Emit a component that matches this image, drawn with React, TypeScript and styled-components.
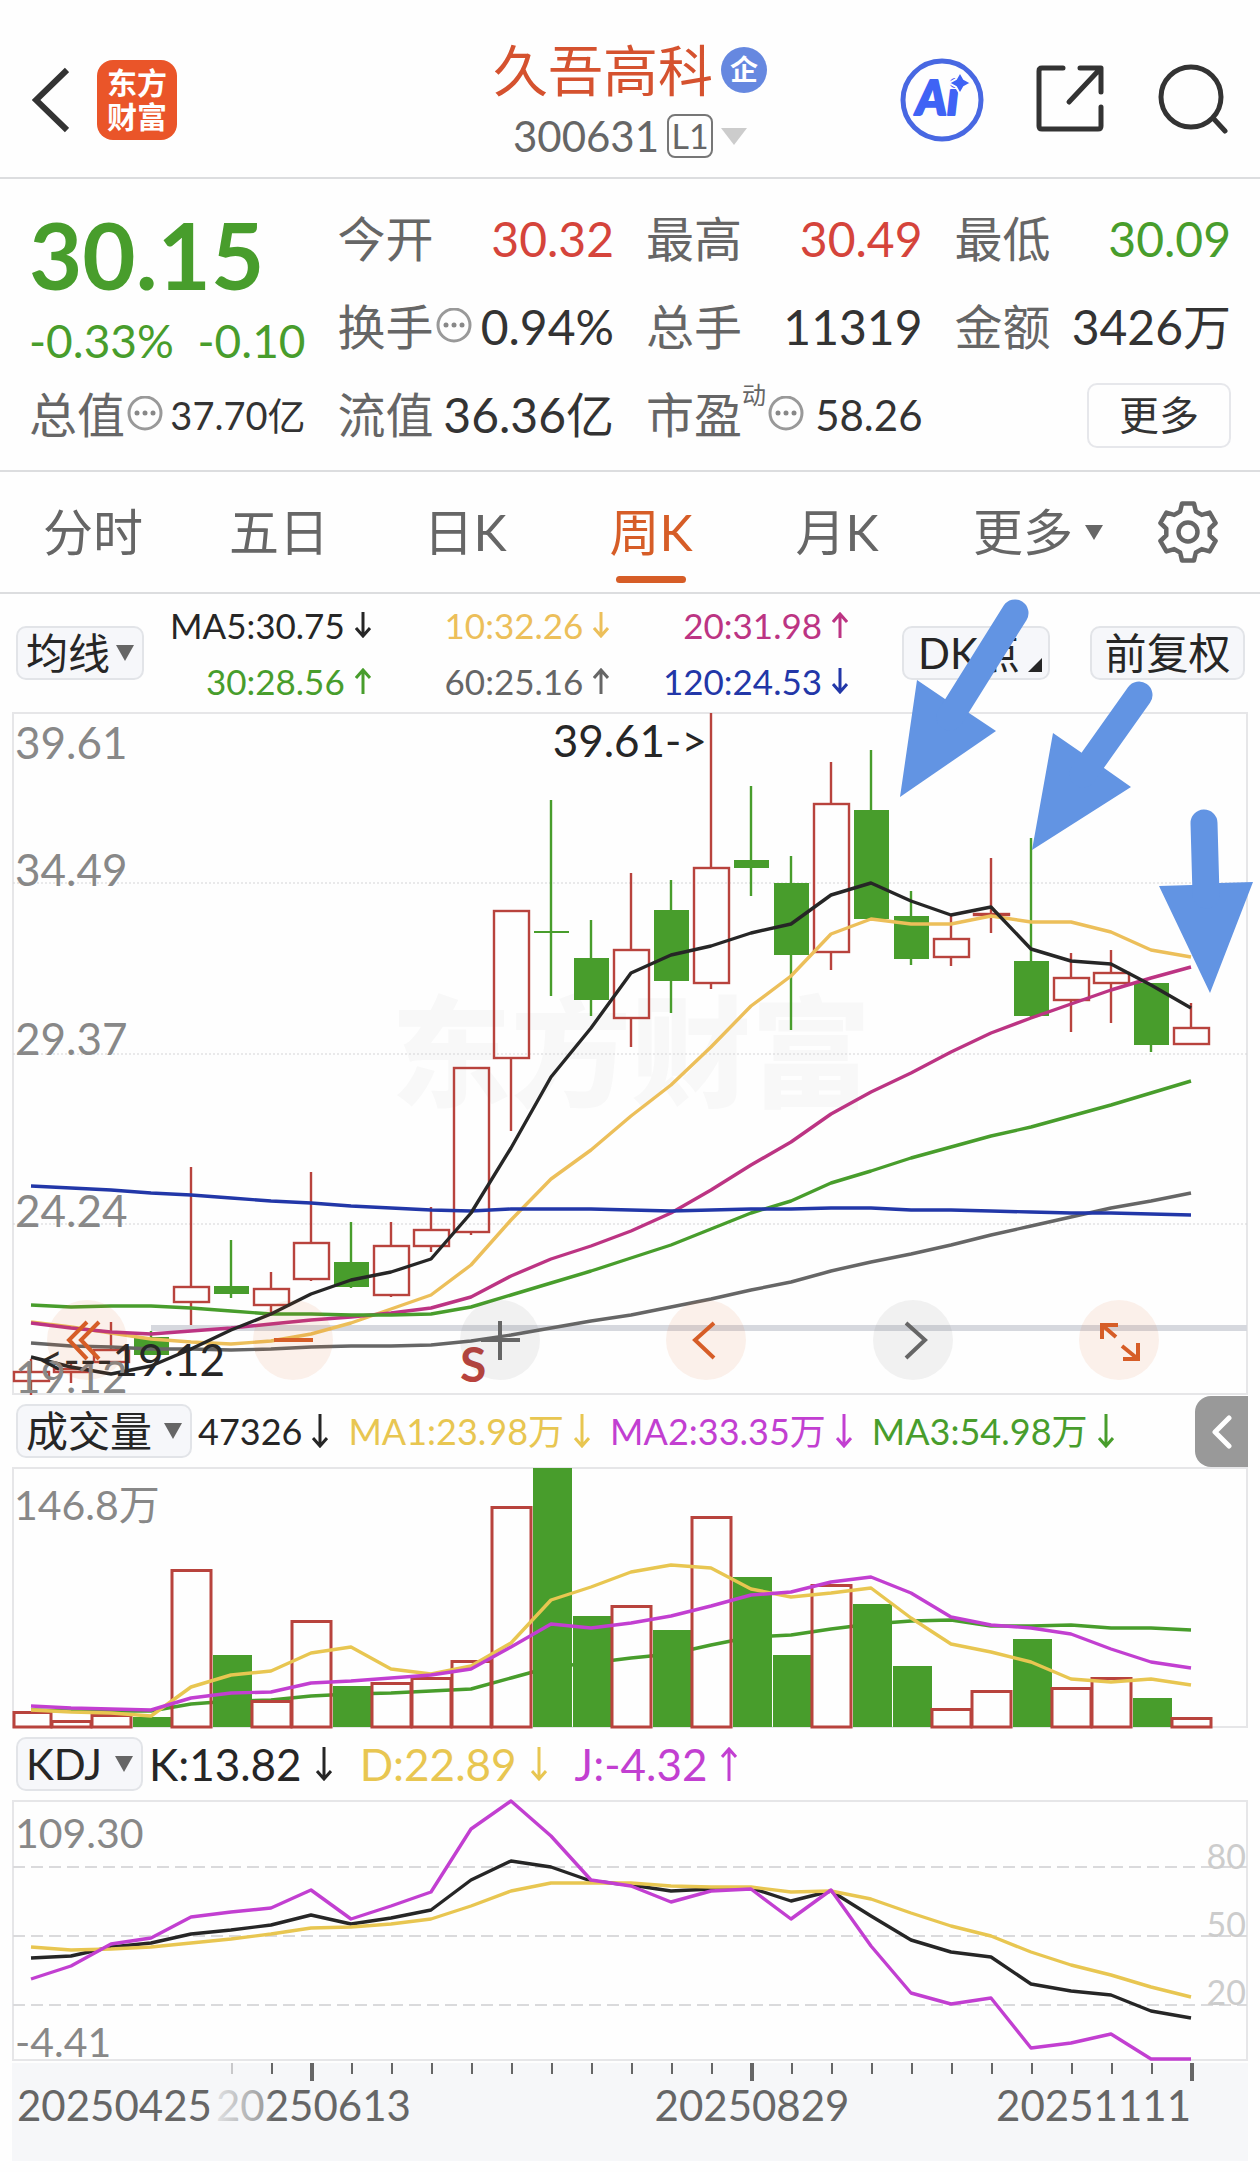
import React from "react";
import styled, { createGlobalStyle, css } from "styled-components";

const C = {
  green: "#489d2c",
  red: "#d5443b",
  candle: "#b8433d",
  text: "#333333",
  ink: "#262626",
  label: "#666666",
  muted: "#888888",
  faint: "#cccccc",
  orange: "#d65d27",
  amber: "#ecbf5a",
  yellow: "#e8c651",
  magenta: "#bc3483",
  purple: "#c23fd1",
  blue: "#2237a8",
  line: "#dcdddf",
  frame: "#e6e6e8",
  note: "#6294e3",
};

const FONT = `Lato, "Noto Sans CJK SC", sans-serif`;

const GlobalStyle = createGlobalStyle`
  *, *::before, *::after { box-sizing: border-box; }
  body {
    margin: 0;
    background: #fefefe;
    color: ${C.text};
    font-family: ${FONT};
  }
  button, select {
    font: inherit;
    color: inherit;
    margin: 0;
    padding: 0;
    border: 0;
    background: none;
    cursor: pointer;
  }
  svg { display: block; }
  svg text { font-family: ${FONT}; }
`;

const Page = styled.main`
  width: 100%;
  padding-bottom: 11px;
  overflow-x: hidden;
`;

/* ---------- header ---------- */

const Header = styled.header`
  display: grid;
  grid-template-columns: 1fr auto 1fr;
  padding: 34px 32px 11px;
  border-bottom: 2px solid ${C.line};
`;

const HeaderSide = styled.div<{ $end?: boolean }>`
  display: flex;
  align-items: center;
  justify-content: ${(p) => (p.$end ? "flex-end" : "flex-start")};
  gap: ${(p) => (p.$end ? 50 : 28)}px;
`;

const IconButton = styled.button`
  display: flex;
  align-items: center;
  justify-content: center;
`;

const BrandLogo = styled.a`
  width: 80px;
  height: 80px;
  border-radius: 16px;
  background: #ea5529;
  color: #fff;
  font-weight: 700;
  font-size: 30px;
  line-height: 34px;
  text-align: center;
  text-decoration: none;
  padding: 5px 8px;
`;

const TitleBlock = styled.div`
  display: flex;
  flex-direction: column;
  align-items: center;
`;

const TitleLine = styled.div`
  display: flex;
  align-items: center;
  gap: 8px;
  height: 72px;
`;

const StockName = styled.h1`
  margin: 0;
  font-size: 55px;
  line-height: 72px;
  font-weight: 400;
  color: #d5522f;
`;

const EntBadge = styled.span`
  width: 46px;
  height: 46px;
  border-radius: 50%;
  background: #6688e0;
  color: #fff;
  font-size: 28px;
  font-weight: 700;
  line-height: 44px;
  text-align: center;
`;

const CodeButton = styled.button`
  display: flex;
  align-items: center;
  gap: 8px;
  height: 60px;
  font-size: 42px;
  line-height: 60px;
  color: ${C.label};
`;

const LevelTag = styled.span`
  width: 46px;
  height: 44px;
  border: 2px solid #777;
  border-radius: 8px;
  font-size: 34px;
  line-height: 40px;
  text-align: center;
`;

/* ---------- quote ---------- */

const Quote = styled.section`
  display: grid;
  grid-template-columns: repeat(4, minmax(0, 1fr));
  grid-auto-rows: 88px;
  column-gap: 32px;
  padding: 16px 29px 11px;
  border-bottom: 2px solid ${C.line};
`;

const PriceCell = styled.div`
  grid-row: span 2;
  color: ${C.green};
`;

const Price = styled.div`
  font-size: 92px;
  line-height: 120px;
  font-weight: 700;
`;

const Change = styled.div`
  display: flex;
  justify-content: space-between;
  font-size: 46px;
  line-height: 52px;
`;

const Cell = styled.div`
  display: flex;
  align-items: center;
  justify-content: space-between;
  white-space: nowrap;
`;

const CellLabel = styled.span`
  display: flex;
  align-items: center;
  font-size: 48px;
  line-height: 64px;
  color: ${C.label};
`;

const SupMark = styled.sup`
  align-self: flex-start;
  font-size: 24px;
  line-height: 24px;
`;

const CellValue = styled.span<{ $color?: string; $size?: number }>`
  font-size: ${(p) => p.$size ?? 48}px;
  line-height: 64px;
  color: ${(p) => p.$color ?? C.text};
`;

const MoreButton = styled.button`
  width: 144px;
  height: 65px;
  margin-left: auto;
  border: 2px solid #e6e7eb;
  border-radius: 10px;
  font-size: 40px;
  line-height: 60px;
`;

/* ---------- tabs ---------- */

const Tabs = styled.nav`
  display: grid;
  grid-template-columns: repeat(6, 31fr) 24fr;
  height: 122px;
  border-bottom: 2px solid ${C.line};
`;

const Tab = styled.button<{ $active?: boolean }>`
  display: flex;
  align-items: center;
  justify-content: center;
  gap: 12px;
  font-size: 50px;
  line-height: 120px;
  color: ${C.label};
  ${(p) =>
    p.$active &&
    css`
      position: relative;
      color: ${C.orange};
      &::after {
        content: "";
        position: absolute;
        left: 50%;
        bottom: 9px;
        width: 70px;
        height: 7px;
        margin-left: -35px;
        border-radius: 4px;
        background: ${C.orange};
      }
    `}
`;

const MoreTab = styled(Tab)`
  padding-left: 30px;
`;

/* ---------- indicator bars ---------- */

const ChartArea = styled.section`
  position: relative;
`;

const Bar = styled.div<{ $tall?: boolean }>`
  position: relative;
  display: flex;
  align-items: center;
  height: ${(p) => (p.$tall ? 118 : 72)}px;
  padding: 0 15px 0 16px;
`;

const pill = css`
  height: 54px;
  border: 2px solid #e2e4e8;
  border-radius: 10px;
  background: #f6f7fa;
  color: ${C.ink};
  font-size: 42px;
  line-height: 50px;
`;

const Picker = styled.label<{ $width: number }>`
  position: relative;
  flex: none;
  width: ${(p) => p.$width}px;
  svg {
    position: absolute;
    right: 10px;
    top: 19px;
    pointer-events: none;
  }
`;

const PickerSelect = styled.select`
  ${pill}
  width: 100%;
  padding: 0 0 0 8px;
  appearance: none;
`;

const PillButton = styled.button<{ $width: number; $menu?: boolean }>`
  ${pill}
  position: relative;
  flex: none;
  width: ${(p) => p.$width}px;
  padding-right: ${(p) => (p.$menu ? 14 : 0)}px;
  svg {
    position: absolute;
    right: 6px;
    bottom: 6px;
  }
`;

const AverageGrid = styled.div`
  flex: 1;
  display: grid;
  grid-template-columns: 38fr 40fr 40fr;
  row-gap: 4px;
`;

const PillGroup = styled.div`
  display: flex;
  gap: 40px;
  margin-left: 54px;
`;

const Reading = styled.span<{ $color: string; $size: number }>`
  display: flex;
  align-items: center;
  justify-content: flex-end;
  gap: ${(p) => (p.$size > 40 ? 14 : 10)}px;
  font-size: ${(p) => p.$size}px;
  line-height: 52px;
  color: ${(p) => p.$color};
  white-space: nowrap;
`;

const Readings = styled.div<{ $gap: number }>`
  display: flex;
  gap: ${(p) => p.$gap}px;
  margin-left: 6px;
`;

const SideToggle = styled.button`
  position: absolute;
  right: 12px;
  top: 1px;
  width: 53px;
  height: 71px;
  border-radius: 16px 0 0 16px;
  background: #999;
  display: flex;
  align-items: center;
  justify-content: center;
`;

/* ---------- plots ---------- */

const Plot = styled.div`
  position: relative;
  margin: 0 12px;
  > svg { width: 100%; height: auto; overflow: visible; }
`;

const PlotControls = styled.div`
  position: absolute;
  left: 0;
  right: 0;
  bottom: 15px;
  display: flex;
  justify-content: space-between;
  padding: 0 89px 0 35px;
`;

const RoundButton = styled.button<{ $warm?: boolean }>`
  width: 80px;
  height: 80px;
  border-radius: 50%;
  background: ${(p) => (p.$warm ? "rgba(220, 95, 35, 0.09)" : "rgba(90, 90, 90, 0.08)")};
  color: ${(p) => (p.$warm ? C.orange : C.label)};
`;

const Notes = styled.svg`
  position: absolute;
  left: 0;
  top: 0;
  width: 100%;
  height: auto;
  pointer-events: none;
`;

/* ---------- icons ---------- */

const Caret = ({ w = 18, h = 16, color = C.label }: { w?: number; h?: number; color?: string }) => (
  <svg width={w} height={h} viewBox="0 0 10 10" preserveAspectRatio="none" aria-hidden>
    <path d="M0 0H10L5 10Z" fill={color} />
  </svg>
);

const Trend = ({ up, h = 28 }: { up?: boolean; h?: number }) => (
  <svg width="16" height={h} viewBox={`0 0 16 ${h}`} fill="none" stroke="currentColor" strokeWidth="3" aria-hidden>
    {up ? <path d={`M8 ${h}V2M1 10L8 2L15 10`} /> : <path d={`M8 0V${h - 2}M1 ${h - 10}L8 ${h - 2}L15 ${h - 10}`} />}
  </svg>
);

const Info = () => (
  <svg width="38" height="38" viewBox="0 0 38 38" aria-hidden>
    <circle cx="20" cy="17" r="16" fill="none" stroke="#999" strokeWidth="3" />
    <circle cx="12" cy="17" r="2.5" fill="#888" />
    <circle cx="20" cy="17" r="2.5" fill="#888" />
    <circle cx="28" cy="17" r="2.5" fill="#888" />
  </svg>
);

const Gear = () => {
  const pts: string[] = [];
  const at = (deg: number, r: number) => {
    const a = (deg * Math.PI) / 180;
    pts.push(`${(32 + r * Math.cos(a)).toFixed(1)},${(32 + r * Math.sin(a)).toFixed(1)}`);
  };
  for (let k = 0; k < 6; k++) {
    const a = -90 + k * 60;
    at(a - 12, 29);
    at(a + 12, 29);
    at(a + 21, 22);
    at(a + 39, 22);
  }
  return (
    <svg width="64" height="64" viewBox="0 0 64 64" fill="none" stroke={C.label} strokeWidth="4.5" strokeLinejoin="round" aria-hidden>
      <polygon points={pts.join(" ")} />
      <circle cx="32" cy="32" r="9.5" />
    </svg>
  );
};

/* ---------- data ---------- */

type Candle = [up: 0 | 1, high: number, top: number, bottom: number, low: number];

const candles: Candle[] = [
  [1, 1359, 1371, 1382, 1395], [1, 1362, 1368, 1373, 1383], [1, 1322, 1349, 1363, 1363],
  [0, 1331, 1337, 1355, 1355], [1, 1167, 1286, 1303, 1325], [0, 1240, 1286, 1294, 1298],
  [1, 1272, 1288, 1306, 1313], [1, 1172, 1242, 1280, 1281], [0, 1222, 1262, 1287, 1288],
  [1, 1222, 1245, 1296, 1297], [1, 1207, 1229, 1247, 1252], [1, 1067, 1067, 1233, 1235],
  [1, 910, 910, 1059, 1131], [0, 800, 931, 933, 996], [0, 920, 958, 1000, 1016],
  [1, 873, 949, 1019, 1047], [0, 880, 910, 981, 1013], [1, 713, 867, 984, 989],
  [0, 786, 860, 868, 896], [0, 856, 883, 955, 1030], [1, 762, 803, 953, 970],
  [0, 750, 810, 919, 919], [0, 891, 916, 959, 965], [1, 916, 938, 958, 966],
  [1, 858, 913, 916, 933], [0, 838, 961, 1016, 1018], [1, 953, 977, 1001, 1032],
  [1, 950, 972, 984, 1023], [0, 983, 983, 1045, 1052], [1, 1003, 1027, 1045, 1045],
];

const averages: { color: string; y: number[] }[] = [
  { color: C.label, y: [1343, 1346, 1347, 1349, 1349, 1350, 1349, 1347, 1346, 1346, 1345, 1341, 1335, 1328, 1321, 1315, 1307, 1299, 1290, 1282, 1271, 1262, 1254, 1245, 1235, 1226, 1217, 1208, 1201, 1193] },
  { color: C.amber, y: [1322, 1327, 1333, 1339, 1342, 1344, 1341, 1334, 1323, 1309, 1295, 1265, 1220, 1179, 1150, 1116, 1085, 1047, 1006, 976, 934, 919, 924, 924, 916, 922, 922, 932, 950, 957] },
  { color: C.magenta, y: [1323, 1328, 1332, 1334, 1331, 1328, 1324, 1320, 1317, 1313, 1308, 1297, 1276, 1259, 1246, 1231, 1213, 1190, 1165, 1142, 1114, 1092, 1073, 1052, 1033, 1018, 1004, 990, 978, 967] },
  { color: C.green, y: [1305, 1307, 1306, 1306, 1308, 1311, 1314, 1314, 1315, 1315, 1314, 1307, 1295, 1283, 1271, 1258, 1245, 1229, 1213, 1201, 1183, 1171, 1158, 1147, 1136, 1127, 1116, 1105, 1093, 1081] },
  { color: C.blue, y: [1186, 1188, 1190, 1193, 1195, 1198, 1201, 1203, 1206, 1208, 1210, 1211, 1209, 1209, 1209, 1210, 1211, 1210, 1209, 1209, 1208, 1208, 1210, 1210, 1211, 1212, 1213, 1213, 1214, 1215] },
  { color: C.ink, y: [1357, 1367, 1374, 1366, 1349, 1330, 1314, 1294, 1280, 1272, 1259, 1213, 1148, 1077, 1028, 973, 955, 946, 933, 924, 895, 883, 901, 915, 907, 949, 961, 964, 985, 1008] },
];

const volumeTops = [
  1711, 1720, 1714, 1717, 1569, 1655, 1700, 1620, 1686, 1682, 1677, 1660, 1506, 1468, 1616,
  1605, 1630, 1516, 1577, 1655, 1584, 1604, 1666, 1708, 1690, 1639, 1687, 1677, 1698, 1717,
];

const volumeYellow = [1710, 1712, 1713, 1716, 1687, 1675, 1671, 1653, 1647, 1669, 1674, 1666, 1643, 1600, 1587, 1572, 1565, 1568, 1589, 1597, 1593, 1588, 1618, 1644, 1652, 1662, 1679, 1682, 1679, 1685];
const volumePurple = [1706, 1708, 1709, 1710, 1698, 1693, 1692, 1683, 1681, 1678, 1675, 1669, 1647, 1624, 1628, 1623, 1616, 1606, 1595, 1592, 1582, 1577, 1593, 1617, 1625, 1628, 1634, 1649, 1662, 1668];
const volumeGreen = [1710, 1711, 1711, 1711, 1704, 1701, 1700, 1696, 1694, 1693, 1691, 1689, 1678, 1667, 1663, 1658, 1654, 1645, 1637, 1635, 1629, 1624, 1621, 1620, 1626, 1626, 1625, 1628, 1628, 1630];

const kLine = [1958, 1956, 1947, 1943, 1934, 1930, 1925, 1915, 1924, 1918, 1910, 1880, 1861, 1867, 1881, 1885, 1891, 1889, 1888, 1901, 1891, 1916, 1940, 1952, 1957, 1984, 1991, 1995, 2011, 2018];
const dLine = [1947, 1950, 1949, 1947, 1943, 1939, 1934, 1928, 1927, 1924, 1919, 1906, 1891, 1883, 1883, 1883, 1886, 1887, 1887, 1892, 1891, 1899, 1913, 1926, 1936, 1952, 1965, 1975, 1987, 1997];
const jLine = [1979, 1966, 1944, 1938, 1917, 1912, 1908, 1890, 1919, 1906, 1892, 1829, 1801, 1836, 1880, 1886, 1902, 1891, 1889, 1919, 1890, 1946, 1993, 2004, 1998, 2048, 2043, 2034, 2059, 2059];

const cx = (i: number) => 31 + i * 40;

const Line = ({ y, color, width = 3.4 }: { y: number[]; color: string; width?: number }) => (
  <polyline
    points={y.map((v, i) => `${cx(i)},${v}`).join(" ")}
    fill="none"
    stroke={color}
    strokeWidth={width}
    strokeLinejoin="round"
  />
);

const Frame = ({ y, h }: { y: number; h: number }) => (
  <rect x="13" y={y} width="1234" height={h} fill="none" stroke={C.frame} strokeWidth="2" />
);

const PriceChart = () => (
  <svg viewBox="12 712 1236 683" role="img" aria-label="周K线">
    <text x="631" y="1098" fontSize="120" fontWeight="900" fill="#f8f8f8" textAnchor="middle">东方财富</text>
    <Frame y={713} h={681} />
    {[883, 1054, 1224].map((y) => (
      <line key={y} x1="13" x2="1247" y1={y} y2={y} stroke="#d4d4d6" strokeDasharray="2 2" />
    ))}
    <rect x="151" y="1325" width="1096" height="6" fill="#d6d8de" />
    {candles.map(([up, high, top, bottom, low], i) => (
      <g key={i} stroke={up ? C.candle : C.green} strokeWidth="2.4">
        {high < top && <line x1={cx(i)} x2={cx(i)} y1={high} y2={top} />}
        {low > bottom && <line x1={cx(i)} x2={cx(i)} y1={bottom} y2={low} />}
        {up ? (
          <rect x={cx(i) - 17} y={top + 1} width="35" height={Math.max(bottom - top - 2, 1)} fill="none" />
        ) : (
          <rect x={cx(i) - 17} y={top} width="35" height={bottom - top} fill={C.green} stroke="none" />
        )}
      </g>
    ))}
    {averages.map((a) => (
      <Line key={a.color} {...a} />
    ))}
    <g fontSize="44" fill={C.muted}>
      <text x="15" y="759">39.61</text>
      <text x="15" y="886">34.49</text>
      <text x="15" y="1055">29.37</text>
      <text x="15" y="1227">24.24</text>
      <text x="15" y="1393">19.12</text>
    </g>
    <g fontSize="44" fill={C.ink} textAnchor="end">
      <text x="707" y="757">39.61-&gt;</text>
      <text x="225" y="1376">&lt;---19.12</text>
    </g>
    <text x="460" y="1382" fontSize="48" fontWeight="700" fill={C.candle}>S</text>
  </svg>
);

const VolumeChart = () => (
  <svg viewBox="12 1467 1236 261" role="img" aria-label="成交量">
    <Frame y={1468} h={259} />
    <Line y={volumeGreen} color={C.green} />
    {volumeTops.map((top, i) =>
      candles[i][0] ? (
        <rect key={i} x={cx(i) - (i ? 19 : 17)} y={top + 1.5} width={i ? 39 : 37} height={1725.5 - top} fill="none" stroke={C.candle} strokeWidth="3" />
      ) : (
        <rect key={i} x={cx(i) - 18} y={top} width="39" height={1727 - top} fill={C.green} />
      ),
    )}
    <Line y={volumeYellow} color={C.yellow} />
    <Line y={volumePurple} color={C.purple} />
    <text x="14" y="1520" fontSize="41" fill={C.muted}>146.8万</text>
  </svg>
);

const KdjChart = () => (
  <svg viewBox="12 1800 1236 262" role="img" aria-label="KDJ">
    <Frame y={1801} h={259} />
    {[1867, 1936, 2005].map((y) => (
      <line key={y} x1="13" x2="1247" y1={y} y2={y} stroke="#dadadc" strokeWidth="2" strokeDasharray="12 6" />
    ))}
    <Line y={kLine} color={C.ink} />
    <Line y={dLine} color={C.yellow} />
    <Line y={jLine} color={C.purple} />
    <g fontSize="41" fill={C.muted}>
      <text x="15" y="1848">109.30</text>
      <text x="15" y="2057">-4.41</text>
    </g>
    <g fontSize="34" fill={C.faint} textAnchor="end">
      <text x="1246" y="1869">80</text>
      <text x="1246" y="1937">50</text>
      <text x="1246" y="2005">20</text>
    </g>
  </svg>
);

const DateAxis = () => (
  <svg viewBox="12 2062 1236 99" role="img" aria-label="日期">
    <defs>
      <linearGradient id="fade" gradientUnits="userSpaceOnUse" x1="216" x2="272" y1="0" y2="0">
        <stop offset="0" stopColor={C.label} stopOpacity="0.15" />
        <stop offset="0.85" stopColor={C.label} stopOpacity="0.6" />
        <stop offset="1" stopColor={C.label} />
      </linearGradient>
    </defs>
    <rect x="12" y="2063" width="1236" height="98" fill="#f6f7f9" />
    {Array.from({ length: 25 }, (_, k) => k + 5).map((i) => {
      const major = i === 7 || i === 18 || i === 29;
      return (
        <line
          key={i}
          x1={cx(i) + 1}
          x2={cx(i) + 1}
          y1="2063"
          y2={major ? 2081 : 2074}
          stroke={i === 5 ? "#c8c8ca" : C.label}
          strokeWidth={major ? 4 : 2}
        />
      );
    })}
    <g fontSize="42" fill={C.label}>
      <text x="17" y="2121">20250425</text>
      <text x="216" y="2121" fill="url(#fade)">20250613</text>
      <text x="752" y="2121" textAnchor="middle">20250829</text>
      <text x="1191" y="2121" textAnchor="end">20251111</text>
    </g>
  </svg>
);

const tabs = ["分时", "五日", "日K", "周K", "月K"];

const maReadings: [string, string, boolean][] = [
  ["MA5:30.75", C.ink, false],
  ["10:32.26", C.amber, false],
  ["20:31.98", C.magenta, true],
  ["30:28.56", C.green, true],
  ["60:25.16", C.label, true],
  ["120:24.53", C.blue, false],
];

const controls: [string, boolean, string][] = [
  ["最早", true, "M40 22L22 40L40 59M52 22L34 40L52 59"],
  ["缩小", true, "M21 40H60"],
  ["放大", false, "M21 40H60M40 21V60"],
  ["向左", true, "M48 23L29 40L48 58"],
  ["向右", false, "M33 23L52 40L33 58"],
  ["全屏", true, "M39 25H23V39M23 25L37 37M44 59H59V43M59 59L43 46"],
];

export default function App() {
  return (
    <Page>
      <GlobalStyle />
      <Header>
        <HeaderSide>
          <IconButton aria-label="返回">
            <svg width="37" height="66" viewBox="0 0 37 66" fill="none" stroke={C.text} strokeWidth="6">
              <path d="M35 3L4 33L35 63" />
            </svg>
          </IconButton>
          <BrandLogo href="#">东方<br />财富</BrandLogo>
        </HeaderSide>
        <TitleBlock>
          <TitleLine>
            <StockName>久吾高科</StockName>
            <EntBadge>企</EntBadge>
          </TitleLine>
          <CodeButton>
            300631
            <LevelTag>L1</LevelTag>
            <Caret w={26} h={17} color={C.faint} />
          </CodeButton>
        </TitleBlock>
        <HeaderSide $end>
          <IconButton aria-label="AI">
            <svg width="84" height="84" viewBox="0 0 84 84">
              <circle cx="42" cy="42" r="39" fill="none" stroke="#4868e2" strokeWidth="5" />
              <text x="16" y="57" fontSize="47" fontWeight="900" fontStyle="italic" fill="#3f63f5" stroke="#3f63f5" strokeWidth="2" strokeLinejoin="round">Ai</text>
              <path d="M60 14L64 21L71 25L64 29L60 36L56 29L49 25L56 21Z" fill="#3f63f5" stroke="#fefefe" strokeWidth="2" />
            </svg>
          </IconButton>
          <IconButton aria-label="分享">
            <svg width="72" height="72" viewBox="0 0 72 72" fill="none" stroke={C.text} strokeWidth="5" strokeLinecap="round" strokeLinejoin="round">
              <path d="M29 4H8Q5 4 5 7V62Q5 65 8 65H64Q67 65 67 62V43" />
              <path d="M46 4H67V28M66 5L35 38" />
            </svg>
          </IconButton>
          <IconButton aria-label="搜索">
            <svg width="72" height="72" viewBox="0 0 72 72" fill="none" stroke={C.text} strokeWidth="5" strokeLinecap="round">
              <circle cx="35" cy="33" r="30" />
              <path d="M57 54L69 67" />
            </svg>
          </IconButton>
        </HeaderSide>
      </Header>

      <Quote>
        <PriceCell>
          <Price>30.15</Price>
          <Change>
            <span>-0.33%</span>
            <span>-0.10</span>
          </Change>
        </PriceCell>
        <Cell>
          <CellLabel>今开</CellLabel>
          <CellValue $color={C.red}>30.32</CellValue>
        </Cell>
        <Cell>
          <CellLabel>最高</CellLabel>
          <CellValue $color={C.red}>30.49</CellValue>
        </Cell>
        <Cell>
          <CellLabel>最低</CellLabel>
          <CellValue $color={C.green}>30.09</CellValue>
        </Cell>
        <Cell>
          <CellLabel>换手<Info /></CellLabel>
          <CellValue>0.94%</CellValue>
        </Cell>
        <Cell>
          <CellLabel>总手</CellLabel>
          <CellValue>11319</CellValue>
        </Cell>
        <Cell>
          <CellLabel>金额</CellLabel>
          <CellValue>3426万</CellValue>
        </Cell>
        <Cell>
          <CellLabel>总值<Info /></CellLabel>
          <CellValue $size={38}>37.70亿</CellValue>
        </Cell>
        <Cell>
          <CellLabel>流值</CellLabel>
          <CellValue>36.36亿</CellValue>
        </Cell>
        <Cell>
          <CellLabel>市盈<SupMark>动</SupMark><Info /></CellLabel>
          <CellValue $size={42}>58.26</CellValue>
        </Cell>
        <Cell>
          <MoreButton>更多</MoreButton>
        </Cell>
      </Quote>

      <Tabs>
        {tabs.map((t) => (
          <Tab key={t} $active={t === "周K"}>{t}</Tab>
        ))}
        <MoreTab>
          更多
          <Caret w={18} h={15} />
        </MoreTab>
        <Tab aria-label="设置"><Gear /></Tab>
      </Tabs>

      <ChartArea>
        <Bar $tall>
          <Picker $width={128}>
            <PickerSelect aria-label="主图指标">
              <option>均线</option>
            </PickerSelect>
            <Caret />
          </Picker>
          <AverageGrid>
            {maReadings.map(([text, color, up]) => (
              <Reading key={text} $color={color} $size={35}>
                {text}
                <Trend up={up} h={26} />
              </Reading>
            ))}
          </AverageGrid>
          <PillGroup>
            <PillButton $width={148} $menu>
              DK点
              <svg width="14" height="14" viewBox="0 0 14 14" aria-hidden>
                <path d="M14 0V14H0Z" fill={C.ink} />
              </svg>
            </PillButton>
            <PillButton $width={155}>前复权</PillButton>
          </PillGroup>
        </Bar>

        <Plot>
          <PriceChart />
          <PlotControls>
            {controls.map(([name, warm, d]) => (
              <RoundButton key={name} $warm={warm} aria-label={name}>
                <svg width="80" height="80" viewBox="0 0 80 80" fill="none" stroke="currentColor" strokeWidth="4">
                  <path d={d} />
                </svg>
              </RoundButton>
            ))}
          </PlotControls>
        </Plot>

        <Bar>
          <Picker $width={176}>
            <PickerSelect aria-label="副图指标一">
              <option>成交量</option>
            </PickerSelect>
            <Caret />
          </Picker>
          <Readings $gap={20}>
            <Reading $color={C.ink} $size={36}>47326<Trend h={34} /></Reading>
            <Reading $color={C.yellow} $size={36}>MA1:23.98万<Trend h={34} /></Reading>
            <Reading $color={C.purple} $size={36}>MA2:33.35万<Trend h={34} /></Reading>
            <Reading $color={C.green} $size={36}>MA3:54.98万<Trend h={34} /></Reading>
          </Readings>
          <SideToggle aria-label="展开侧栏">
            <svg width="20" height="34" viewBox="0 0 20 34" fill="none" stroke="#fff" strokeWidth="5" strokeLinecap="round" strokeLinejoin="round">
              <path d="M17 3L3 17L17 31" />
            </svg>
          </SideToggle>
        </Bar>

        <Plot>
          <VolumeChart />
        </Plot>

        <Bar>
          <Picker $width={127}>
            <PickerSelect aria-label="副图指标二">
              <option>KDJ</option>
            </PickerSelect>
            <Caret />
          </Picker>
          <Readings $gap={28}>
            <Reading $color={C.ink} $size={44}>K:13.82<Trend h={34} /></Reading>
            <Reading $color={C.yellow} $size={44}>D:22.89<Trend h={34} /></Reading>
            <Reading $color={C.purple} $size={44}>J:-4.32<Trend up h={34} /></Reading>
          </Readings>
        </Bar>

        <Plot>
          <KdjChart />
          <DateAxis />
        </Plot>

        <Notes viewBox="0 594 1260 410" fill={C.note} stroke={C.note} aria-hidden>
          <g stroke="none">
            <path d="M900 797L917 680L945 699L969 713L996 731Z" />
            <path d="M1032 850L1053 733L1082 753L1104 768L1131 787Z" />
            <path d="M1210 993L1159 886L1192 885L1219 883L1253 882Z" />
          </g>
          <g strokeWidth="27" strokeLinecap="round">
            <path d="M950 717L1015 613" />
            <path d="M1083 774L1139 695" />
            <path d="M1206 895L1204 823" />
          </g>
        </Notes>
      </ChartArea>
    </Page>
  );
}
